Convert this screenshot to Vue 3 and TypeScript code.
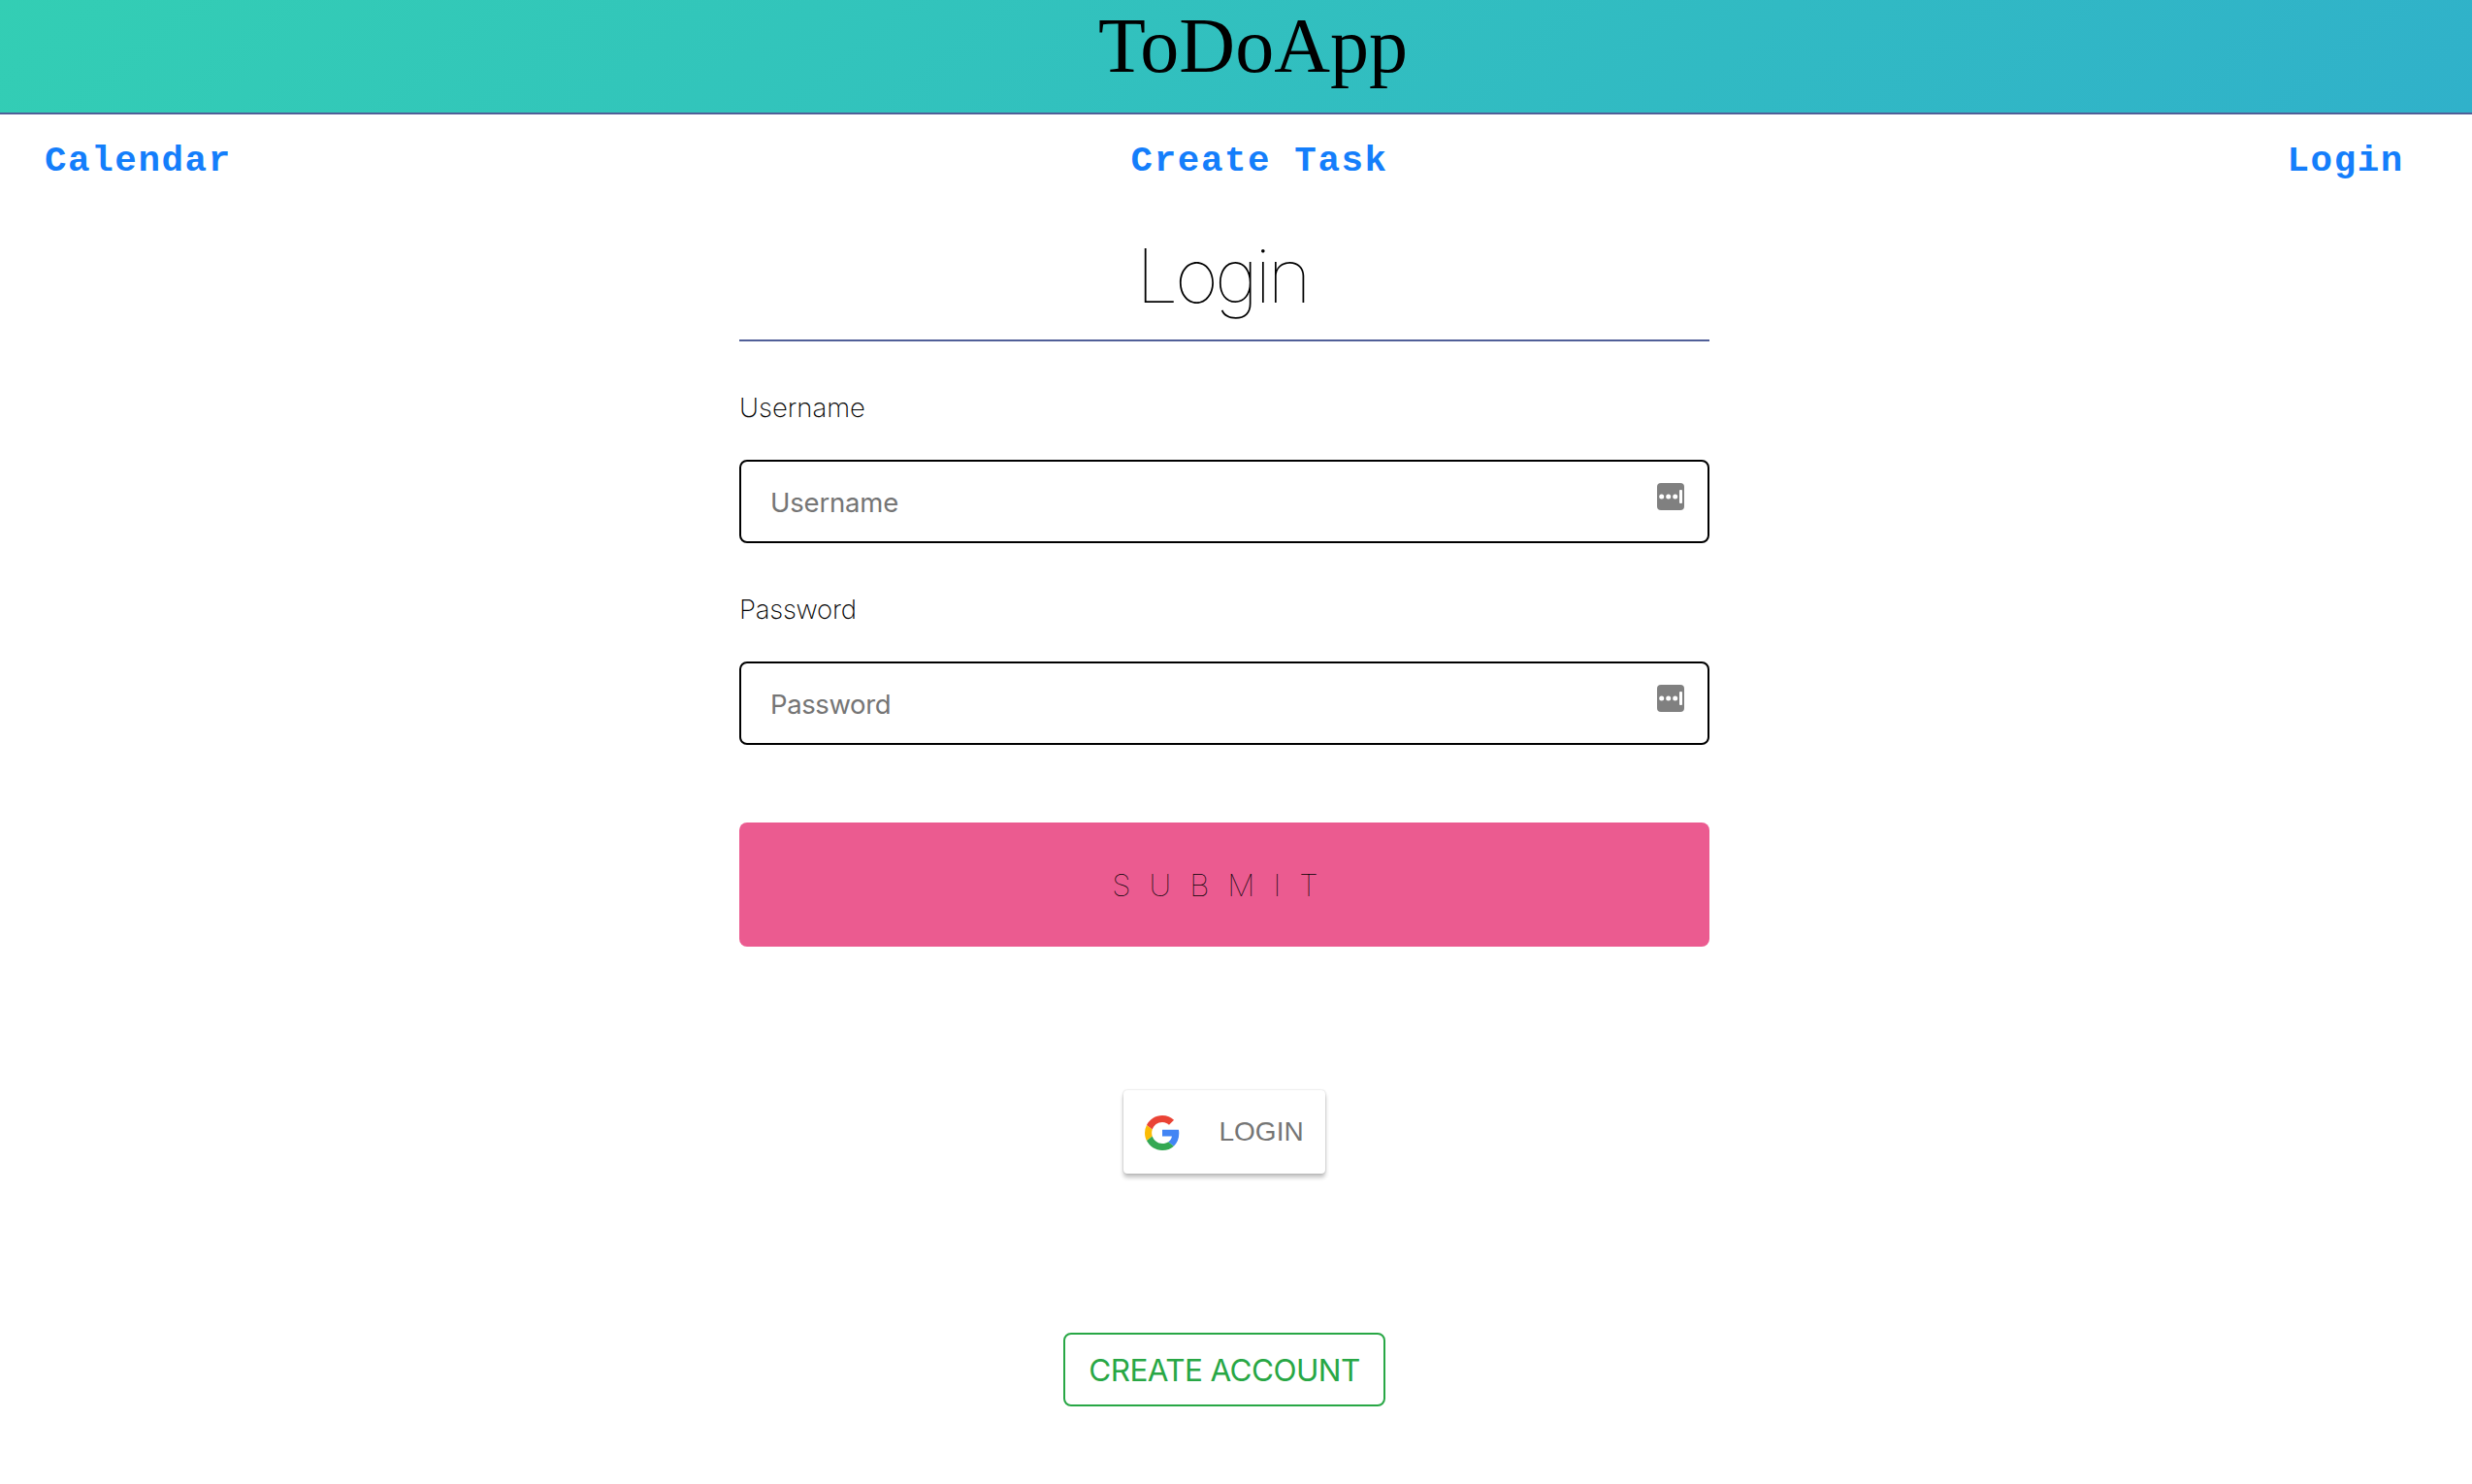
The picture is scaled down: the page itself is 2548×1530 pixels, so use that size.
<script setup lang="ts">
interface Field {
  id: string
  label: string
  type: string
}

const links: string[] = ['Calendar', 'Create Task', 'Login']
const fields: Field[] = [
  { id: 'username', label: 'Username', type: 'text' },
  { id: 'password', label: 'Password', type: 'password' },
]
</script>

<template>
  <div class="page">
    <header class="banner"><span class="brand">ToDoApp</span></header>
    <nav class="nav">
      <a v-for="link in links" :key="link" class="nav-link">{{ link }}</a>
    </nav>
    <main class="card">
      <h1 class="heading"><span>Login</span></h1>
      <form class="form" @submit.prevent>
        <div v-for="field in fields" :key="field.id" class="field" :class="field.id">
          <label class="label" :for="field.id"><span>{{ field.label }}</span></label>
          <div class="control">
            <input :id="field.id" class="input" :type="field.type" :placeholder="field.label" />
            <svg class="autofill" viewBox="0 0 28 28">
              <rect width="28" height="28" rx="4" fill="#808080" />
              <circle cx="4.7" cy="14" r="2.5" fill="#fff" />
              <circle cx="11.7" cy="14" r="2.5" fill="#fff" />
              <circle cx="18.7" cy="14" r="2.5" fill="#fff" />
              <rect x="23" y="7" width="3" height="14" rx="1" fill="#fff" />
            </svg>
          </div>
        </div>
        <button class="submit" type="submit"><span>SUBMIT</span></button>
      </form>
      <button class="google" type="button">
        <svg class="google-icon" viewBox="0 0 18 18">
          <path fill="#EA4335" d="M9 3.48c1.69 0 2.83.73 3.48 1.34l2.54-2.48C13.46.89 11.43 0 9 0 5.48 0 2.44 2.02.96 4.96l2.91 2.26C4.6 5.05 6.62 3.48 9 3.48z" />
          <path fill="#4285F4" d="M17.64 9.2c0-.74-.06-1.28-.19-1.84H9v3.34h4.96c-.1.83-.64 2.08-1.84 2.92l2.84 2.2c1.7-1.57 2.68-3.88 2.68-6.62z" />
          <path fill="#FBBC05" d="M3.88 10.78A5.54 5.54 0 0 1 3.58 9c0-.62.11-1.22.29-1.78L.96 4.96A9.008 9.008 0 0 0 0 9c0 1.45.35 2.82.96 4.04l2.92-2.26z" />
          <path fill="#34A853" d="M9 18c2.43 0 4.47-.8 5.96-2.18l-2.84-2.2c-.76.53-1.78.9-3.12.9-2.38 0-4.4-1.57-5.12-3.74L.97 13.04C2.45 15.98 5.48 18 9 18z" />
        </svg>
        <span>LOGIN</span>
      </button>
      <button class="create" type="button"><span>CREATE ACCOUNT</span></button>
    </main>
  </div>
</template>

<style>
body {
  margin: 0;
  background: #fff;
}
</style>

<style scoped>
.page {
  box-sizing: border-box;
  min-height: 1530px;
  background: #fff;
  font-family: Inter, "Liberation Sans", sans-serif;
  color: #000;
}
button {
  margin: 0;
  padding: 0;
  box-sizing: border-box;
  font-family: inherit;
}
.banner {
  height: 116px;
  border-bottom: 2px solid #505f98;
  background: linear-gradient(141deg, #33ceb4 0%, #30b1ca 100%);
  display: flex;
  justify-content: center;
  padding-left: 35px;
}
.brand {
  font: 80px/95px "Liberation Serif", serif;
}
.nav {
  height: 95px;
  display: flex;
  justify-content: space-between;
  padding: 0 70px 0 46px;
}
.nav-link {
  font: bold 37.5px/97px "Liberation Mono", monospace;
  letter-spacing: 1.6px;
  color: #147efb;
}
.card {
  width: 1000px;
  margin-left: 762px;
  display: flex;
  flex-direction: column;
  align-items: center;
}
.heading {
  box-sizing: border-box;
  width: 100%;
  height: 139px;
  margin: 0;
  padding: 3px 5px 0 0;
  border-bottom: 2px solid #505f98;
  text-align: center;
  font-size: 77.5px;
  line-height: 137px;
  font-weight: 100;
  letter-spacing: -3.7px;
}
.form {
  width: 100%;
  padding-top: 48px;
}
.field {
  height: 160px;
  margin-bottom: 48px;
}
.label {
  display: block;
  height: 40px;
  margin-bottom: 34px;
  font-size: 27.5px;
  line-height: 40px;
  font-weight: 200;
}
.control {
  position: relative;
}
.input {
  box-sizing: border-box;
  display: block;
  width: 100%;
  height: 86px;
  padding: 2px 70px 0 30px;
  border: 2px solid #000;
  border-radius: 8px;
  background: #fff;
  font-family: inherit;
  font-size: 27.5px;
  letter-spacing: -0.2px;
  outline: none;
}
.password .label {
  letter-spacing: -0.25px;
}
.password .input {
  letter-spacing: -0.4px;
}
.input::placeholder {
  color: #757575;
  opacity: 1;
}
.autofill {
  position: absolute;
  right: 26px;
  top: 24px;
  width: 28px;
  height: 28px;
}
.submit {
  display: block;
  width: 100%;
  height: 128px;
  margin-top: 80px;
  border: 0;
  border-radius: 8px;
  background: #eb5b90;
  color: #000;
  font-size: 31.5px;
  font-weight: 100;
  letter-spacing: 19px;
}
.google {
  width: 208px;
  height: 86px;
  margin-top: 148px;
  padding-left: 22px;
  border: 0;
  border-radius: 4px;
  background: #fff;
  box-shadow: 0 4px 4px rgba(0, 0, 0, 0.24), 0 0 2px rgba(0, 0, 0, 0.24);
  display: flex;
  align-items: center;
  gap: 40.5px;
  font: 28px/40px "Liberation Sans", sans-serif;
  color: #757575;
}
.google-icon {
  width: 36px;
  height: 36px;
  margin-top: 2px;
}
.create {
  width: 332px;
  height: 76px;
  margin-top: 164px;
  border: 2px solid #28a745;
  border-radius: 8px;
  background: #fff;
  color: #28a745;
  font-size: 31.5px;
  letter-spacing: -0.6px;
  white-space: nowrap;
}
</style>
